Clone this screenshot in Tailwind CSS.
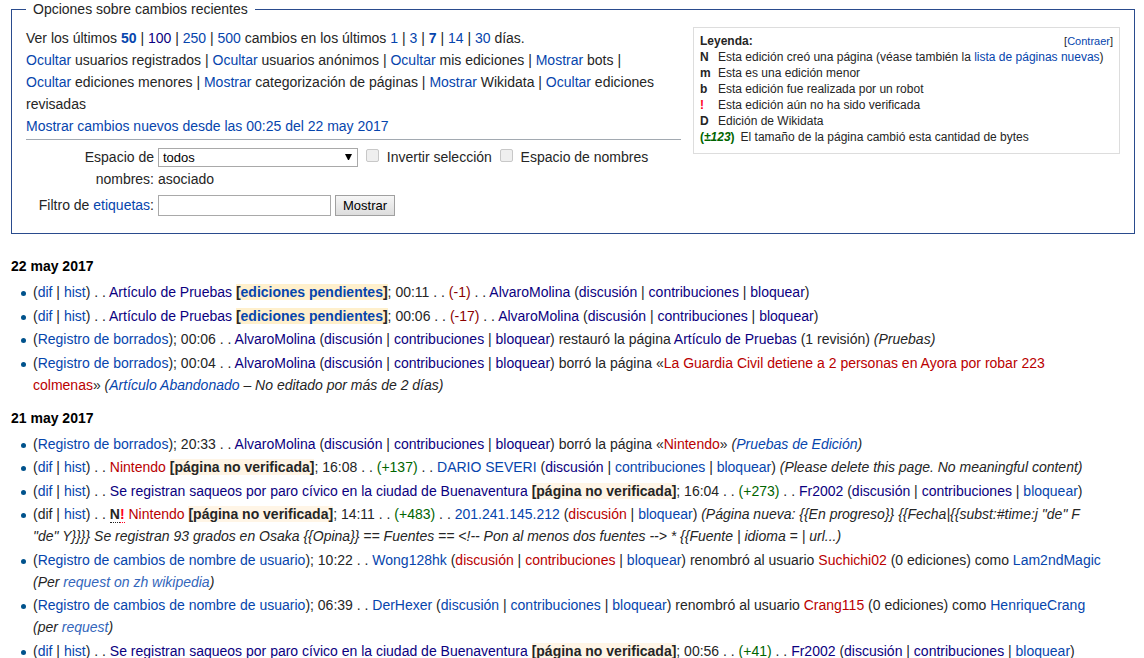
<!DOCTYPE html>
<html lang="es">
<head>
<meta charset="utf-8">
<meta name="viewport" content="width=device-width, initial-scale=1">
<title>Cambios recientes</title>
<script src="https://cdn.jsdelivr.net/npm/@tailwindcss/browser@4"></script>
</head>
<body class="bg-white font-['Liberation_Sans',Arial,sans-serif] text-[14px] leading-[22px] text-[#252525]">
<main class="pl-[11px] pr-[9px]">

<fieldset class="border border-[#2a4b8d] px-[14px] pt-[9px] pb-[17px] min-w-0">
  <legend class="px-[7px] leading-[18px]">Opciones sobre cambios recientes</legend>
  <div class="flex items-start gap-3">
    <div class="flex-1 min-w-0">
      <p>Ver los últimos <a href="#" class="font-bold text-[#0645ad]">50</a> | <a href="#" class="text-[#0b0080]">100</a> | <a href="#" class="text-[#0645ad]">250</a> | <a href="#" class="text-[#0645ad]">500</a> cambios en los últimos <a href="#" class="text-[#0645ad]">1</a> | <a href="#" class="text-[#0645ad]">3</a> | <a href="#" class="font-bold text-[#0645ad]">7</a> | <a href="#" class="text-[#0645ad]">14</a> | <a href="#" class="text-[#0645ad]">30</a> días.</p>
      <p><a href="#" class="text-[#0645ad]">Ocultar</a> usuarios registrados | <a href="#" class="text-[#0645ad]">Ocultar</a> usuarios anónimos | <a href="#" class="text-[#0645ad]">Ocultar</a> mis ediciones | <a href="#" class="text-[#0645ad]">Mostrar</a> bots |<br><a href="#" class="text-[#0645ad]">Ocultar</a> ediciones menores | <a href="#" class="text-[#0645ad]">Mostrar</a> categorización de páginas | <a href="#" class="text-[#0645ad]">Mostrar</a> Wikidata | <a href="#" class="text-[#0645ad]">Ocultar</a> ediciones<br>revisadas</p>
      <p><a href="#" class="text-[#0645ad]">Mostrar cambios nuevos desde las 00:25 del 22 may 2017</a></p>
      <hr class="mt-0.5 border-[#a2a9b1]">
      <form class="mt-1.5 grid grid-cols-[128px_1fr] gap-x-1 gap-y-1">
        <label for="ns" class="text-right pl-8">Espacio de nombres:</label>
        <div>
          <span class="relative inline-block align-top pt-0.5"><select id="ns" class="block h-[19px] w-[200px] appearance-none border border-[#a9a9a9] bg-white pl-1 text-[13px] leading-[17px] text-black"><option>todos</option></select><svg class="pointer-events-none absolute right-1.5 top-2 h-[6px] w-[7px]" viewBox="0 0 7 6"><path d="M0 0H7L4 6H3Z" fill="#000"/></svg></span>
          <input id="inv" type="checkbox" class="ml-1 mr-1 mt-[3px] size-[13px] appearance-none rounded-[2px] border border-[#c8c8c8] bg-[#efefef] align-top"> <label for="inv">Invertir selección</label>
          <input id="assoc" type="checkbox" class="ml-1 mr-1 mt-[3px] size-[13px] appearance-none rounded-[2px] border border-[#c8c8c8] bg-[#efefef] align-top"> <label for="assoc">Espacio de nombres<br>asociado</label>
        </div>
        <label for="tag" class="text-right">Filtro de <a href="#" class="text-[#0645ad]">etiquetas</a>:</label>
        <div class="flex items-start gap-1 pt-px">
          <input id="tag" type="text" class="h-[21px] w-[173px] border border-[#a9a9a9] bg-white px-1">
          <button type="button" class="h-[21px] border border-[#a0a0a0] bg-linear-to-b from-[#f6f6f6] to-[#dddddd] px-[7px] text-[13px] leading-[19px] text-black">Mostrar</button>
        </div>
      </form>
    </div>
    <section class="w-[427px] shrink-0 border border-[#dddddd] px-1.5 pt-[5px] pb-2 text-[12px] leading-4">
      <div class="flex justify-between"><b>Leyenda:</b><span class="text-[11px]">[<a href="#" class="text-[#0645ad]">Contraer</a>]</span></div>
      <dl>
        <div class="flex"><dt class="w-[18px] font-bold">N</dt><dd>Esta edición creó una página (véase también la <a href="#" class="text-[#0645ad]">lista de páginas nuevas</a>)</dd></div>
        <div class="flex"><dt class="w-[18px] font-bold">m</dt><dd>Esta es una edición menor</dd></div>
        <div class="flex"><dt class="w-[18px] font-bold">b</dt><dd>Esta edición fue realizada por un robot</dd></div>
        <div class="flex"><dt class="w-[18px] font-bold text-[#ff0022]">!</dt><dd>Esta edición aún no ha sido verificada</dd></div>
        <div class="flex"><dt class="w-[18px] font-bold">D</dt><dd>Edición de Wikidata</dd></div>
        <div class="flex"><dt class="pr-1.5 font-bold text-[#006400]">(<i>±123</i>)</dt><dd>El tamaño de la página cambió esta cantidad de bytes</dd></div>
      </dl>
    </section>
  </div>
</fieldset>

<h4 class="mt-[21px] mb-1 font-bold text-black">22 may 2017</h4>
<ul class="pl-[10px] *:flex *:odd:mb-0.5 *:even:mb-px *:before:mt-[10px] *:before:mr-[7px] *:before:size-[5px] *:before:shrink-0 *:before:rounded-full *:before:bg-[#00528c] *:before:content-['']">
  <li><div>(<a href="#" class="text-[#0645ad]">dif</a> | <a href="#" class="text-[#0645ad]">hist</a>) . . <a href="#" class="text-[#0b0080]">Artículo de Pruebas</a> <b class="bg-[#fff0cc]">[<a href="#" class="text-[#0645ad]">ediciones pendientes</a>]</b>; 00:11 . . <span class="text-[#8b0000]">(-1)</span> . . <a href="#" class="text-[#0b0080]">AlvaroMolina</a> (<a href="#" class="text-[#0b0080]">discusión</a> | <a href="#" class="text-[#0b0080]">contribuciones</a> | <a href="#" class="text-[#0b0080]">bloquear</a>)</div></li>
  <li><div>(<a href="#" class="text-[#0645ad]">dif</a> | <a href="#" class="text-[#0645ad]">hist</a>) . . <a href="#" class="text-[#0b0080]">Artículo de Pruebas</a> <b class="bg-[#fff0cc]">[<a href="#" class="text-[#0645ad]">ediciones pendientes</a>]</b>; 00:06 . . <span class="text-[#8b0000]">(-17)</span> . . <a href="#" class="text-[#0b0080]">AlvaroMolina</a> (<a href="#" class="text-[#0b0080]">discusión</a> | <a href="#" class="text-[#0b0080]">contribuciones</a> | <a href="#" class="text-[#0b0080]">bloquear</a>)</div></li>
  <li><div>(<a href="#" class="text-[#0645ad]">Registro de borrados</a>); 00:06 . . <a href="#" class="text-[#0b0080]">AlvaroMolina</a> (<a href="#" class="text-[#0b0080]">discusión</a> | <a href="#" class="text-[#0b0080]">contribuciones</a> | <a href="#" class="text-[#0b0080]">bloquear</a>) restauró la página <a href="#" class="text-[#0b0080]">Artículo de Pruebas</a> (1 revisión) <i>(Pruebas)</i></div></li>
  <li><div>(<a href="#" class="text-[#0645ad]">Registro de borrados</a>); 00:04 . . <a href="#" class="text-[#0b0080]">AlvaroMolina</a> (<a href="#" class="text-[#0b0080]">discusión</a> | <a href="#" class="text-[#0b0080]">contribuciones</a> | <a href="#" class="text-[#0b0080]">bloquear</a>) borró la página «<a href="#" class="text-[#ba0000]">La Guardia Civil detiene a 2 personas en Ayora por robar 223<br>colmenas</a>» <i>(<a href="#" class="text-[#0645ad]">Artículo Abandonado</a> – No editado por más de 2 días)</i></div></li>
</ul>

<h4 class="mt-[11px] mb-1 font-bold text-black">21 may 2017</h4>
<ul class="pl-[10px] *:flex *:odd:mb-px *:even:mb-0.5 *:before:mt-[10px] *:before:mr-[7px] *:before:size-[5px] *:before:shrink-0 *:before:rounded-full *:before:bg-[#00528c] *:before:content-['']">
  <li><div>(<a href="#" class="text-[#0645ad]">Registro de borrados</a>); 20:33 . . <a href="#" class="text-[#0b0080]">AlvaroMolina</a> (<a href="#" class="text-[#0b0080]">discusión</a> | <a href="#" class="text-[#0b0080]">contribuciones</a> | <a href="#" class="text-[#0b0080]">bloquear</a>) borró la página «<a href="#" class="text-[#ba0000]">Nintendo</a>» <i>(<a href="#" class="text-[#0645ad]">Pruebas de Edición</a>)</i></div></li>
  <li><div>(<a href="#" class="text-[#0645ad]">dif</a> | <a href="#" class="text-[#0645ad]">hist</a>) . . <a href="#" class="text-[#ba0000]">Nintendo</a> <b class="bg-[#fff5e6]">[página no verificada]</b>; 16:08 . . <span class="text-[#006400]">(+137)</span> . . <a href="#" class="text-[#0645ad]">DARIO SEVERI</a> (<a href="#" class="text-[#0b0080]">discusión</a> | <a href="#" class="text-[#0645ad]">contribuciones</a> | <a href="#" class="text-[#0645ad]">bloquear</a>) <i>(Please delete this page. No meaningful content)</i></div></li>
  <li><div>(<a href="#" class="text-[#0645ad]">dif</a> | <a href="#" class="text-[#0645ad]">hist</a>) . . <a href="#" class="text-[#0b0080]">Se registran saqueos por paro cívico en la ciudad de Buenaventura</a> <b class="bg-[#fff5e6]">[página no verificada]</b>; 16:04 . . <span class="text-[#006400]">(+273)</span> . . <a href="#" class="text-[#0b0080]">Fr2002</a> (<a href="#" class="text-[#0b0080]">discusión</a> | <a href="#" class="text-[#0b0080]">contribuciones</a> | <a href="#" class="text-[#0645ad]">bloquear</a>)</div></li>
  <li><div>(dif | <a href="#" class="text-[#0645ad]">hist</a>) . . <abbr class="border-b border-dotted border-[#252525] font-bold no-underline">N</abbr><abbr class="border-b border-dotted border-[#ff0022] font-bold text-[#ff0022] no-underline">!</abbr> <a href="#" class="text-[#ba0000]">Nintendo</a> <b class="bg-[#fff5e6]">[página no verificada]</b>; 14:11 . . <span class="text-[#006400]">(+483)</span> . . <a href="#" class="text-[#0645ad]">201.241.145.212</a> (<a href="#" class="text-[#ba0000]">discusión</a> | <a href="#" class="text-[#0645ad]">bloquear</a>) <i>(Página nueva: {{En progreso}} {{Fecha|{{subst:#time:j "de" F<br>"de" Y}}}} Se registran 93 grados en Osaka {{Opina}} == Fuentes == &lt;!-- Pon al menos dos fuentes --&gt; * {{Fuente | idioma = | url...)</i></div></li>
  <li><div>(<a href="#" class="text-[#0645ad]">Registro de cambios de nombre de usuario</a>); 10:22 . . <a href="#" class="text-[#0645ad]">Wong128hk</a> (<a href="#" class="text-[#ba0000]">discusión</a> | <a href="#" class="text-[#ba0000]">contribuciones</a> | <a href="#" class="text-[#0645ad]">bloquear</a>) renombró al usuario <a href="#" class="text-[#ba0000]">Suchichi02</a> (0 ediciones) como <a href="#" class="text-[#0645ad]">Lam2ndMagic</a><br><i>(Per <a href="#" class="text-[#3366bb]">request on zh wikipedia</a>)</i></div></li>
  <li><div>(<a href="#" class="text-[#0645ad]">Registro de cambios de nombre de usuario</a>); 06:39 . . <a href="#" class="text-[#0645ad]">DerHexer</a> (<a href="#" class="text-[#0645ad]">discusión</a> | <a href="#" class="text-[#0645ad]">contribuciones</a> | <a href="#" class="text-[#0645ad]">bloquear</a>) renombró al usuario <a href="#" class="text-[#ba0000]">Crang115</a> (0 ediciones) como <a href="#" class="text-[#0645ad]">HenriqueCrang</a><br><i>(per <a href="#" class="text-[#3366bb]">request</a>)</i></div></li>
  <li><div>(<a href="#" class="text-[#0645ad]">dif</a> | <a href="#" class="text-[#0645ad]">hist</a>) . . <a href="#" class="text-[#0b0080]">Se registran saqueos por paro cívico en la ciudad de Buenaventura</a> <b class="bg-[#fff5e6]">[página no verificada]</b>; 00:56 . . <span class="text-[#006400]">(+41)</span> . . <a href="#" class="text-[#0b0080]">Fr2002</a> (<a href="#" class="text-[#0b0080]">discusión</a> | <a href="#" class="text-[#0b0080]">contribuciones</a> | <a href="#" class="text-[#0645ad]">bloquear</a>)</div></li>
</ul>
</main>
</body>
</html>
